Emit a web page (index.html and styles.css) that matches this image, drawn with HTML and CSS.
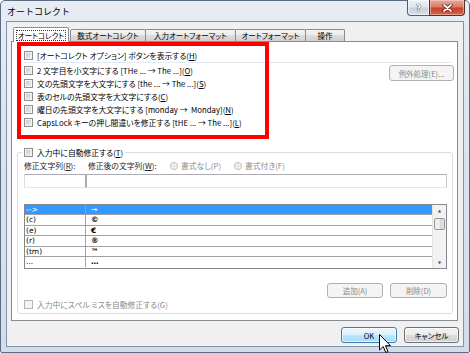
FILE: index.html
```html
<!doctype html>
<html lang="ja">
 <head>
  <meta charset="utf-8">
  <title>オートコレクト</title>
  <link rel="stylesheet" href="styles.css">
 </head>
 <body>
  <div class="dialog">
   <div class="title-bar">
    <span class="title-text">オートコレクト</span>
    <div class="caption-buttons">
     <div class="caption-btn help-btn">?</div>
     <div class="caption-btn close-btn">
      <svg width="11" height="8" viewBox="0 0 11 8"><path d="M2 1 L9 7 M9 1 L2 7" stroke="#3a1a14" stroke-width="3.2" stroke-linecap="round"/><path d="M2 1 L9 7 M9 1 L2 7" stroke="#ffffff" stroke-width="1.8" stroke-linecap="round"/></svg>
     </div>
    </div>
   </div>
   <div class="client">
    <div class="tab-row">
     <div class="tab tab-active"><span class="focus-rect">オートコレクト</span></div>
     <div class="tab tab-math">数式オートコレクト</div>
     <div class="tab tab-input">入力オートフォーマット</div>
     <div class="tab tab-format">オートフォーマット</div>
     <div class="tab tab-action">操作</div>
    </div>
    <div class="tab-panel">
     <div class="annot-box"></div>
     <div class="check-row"><span class="checkbox"></span><span>[オートコレクト オプション] ボタンを表示する(<u>H</u>)</span></div>
     <div class="separator"></div>
     <div class="options-block">
      <div class="option-list">
       <div class="check-row"><span class="checkbox"></span><span>2 文字目を小文字にする [THe ... → The ...](<u>O</u>)</span></div>
       <div class="check-row"><span class="checkbox"></span><span>文の先頭文字を大文字にする [the ... → The ...](<u>S</u>)</span></div>
       <div class="check-row"><span class="checkbox"></span><span>表のセルの先頭文字を大文字にする(<u>C</u>)</span></div>
       <div class="check-row"><span class="checkbox"></span><span>曜日の先頭文字を大文字にする [monday → &nbsp;Monday](<u>N</u>)</span></div>
       <div class="check-row"><span class="checkbox"></span><span>CapsLock キーの押し間違いを修正する [tHE ... → The ...](<u>L</u>)</span></div>
      </div>
      <div class="btn btn-disabled exceptions-btn">例外処理(E)...</div>
     </div>

     <div class="group-box">
      <div class="group-legend"><span class="checkbox"></span><span>入力中に自動修正する(<u>T</u>)</span></div>
      <div class="field-labels">
       <span class="label-from">修正文字列(<u>R</u>):</span>
       <span class="label-to">修正後の文字列(<u>W</u>):</span>
       <span class="radio-item"><span class="radio"></span>書式なし(P)</span>
       <span class="radio-item"><span class="radio"></span>書式付き(F)</span>
      </div>
      <div class="field-inputs">
       <div class="text-input input-from"></div>
       <div class="text-input input-to"></div>
      </div>
      <div class="entry-list">
       <div class="entry-rows">
        <div class="entry-row selected"><span class="col-from">--&gt;</span><span class="col-to">→</span></div>
        <div class="entry-row"><span class="col-from">(c)</span><span class="col-to">©</span></div>
        <div class="entry-row"><span class="col-from">(e)</span><span class="col-to">€</span></div>
        <div class="entry-row"><span class="col-from">(r)</span><span class="col-to">®</span></div>
        <div class="entry-row"><span class="col-from">(tm)</span><span class="col-to">™</span></div>
        <div class="entry-row"><span class="col-from">...</span><span class="col-to">…</span></div>
       </div>
       <div class="scrollbar">
        <div class="scroll-arrow">&#9650;</div>
        <div class="scroll-thumb"></div>
        <div class="scroll-track"></div>
        <div class="scroll-arrow">&#9660;</div>
       </div>
      </div>
      <div class="list-buttons">
       <div class="btn btn-disabled btn-add">追加(A)</div>
       <div class="btn btn-disabled btn-delete">削除(D)</div>
      </div>
      <div class="check-row check-disabled"><span class="checkbox"></span><span>入力中にスペル ミスを自動修正する(G)</span></div>
     </div>
    </div>
    <div class="dialog-footer">
     <div class="btn btn-hover btn-ok">OK</div>
     <div class="btn btn-cancel">キャンセル</div>
    </div>
   </div>
   <svg class="cursor" width="13" height="20" viewBox="0 0 13 20"><path d="M0.5 0.5 L0.5 16 L4.2 12.5 L6.8 18.5 L9 17.5 L6.5 11.7 L11.5 11.7 Z" fill="#ffffff" stroke="#000000" stroke-width="1" stroke-linejoin="miter"/></svg>
  </div>
 </body>
</html>
```

FILE: styles.css
```css
	* {
		box-sizing: border-box;
	}

	body {
		margin: 0;
		padding: 0;
		background: #ffffff;
		font-family: "Noto Sans CJK JP", "Noto Sans", sans-serif;
		font-size: 7.8px;
		font-feature-settings: "palt";
		color: #000000;
	}

	u {
		text-decoration-thickness: 1px;
		text-underline-offset: 1px;
	}

	/* window frame */
	.dialog {
		position: relative;
		width: 470px;
		height: 353px;
		border: 1px solid #5b6d83;
		border-radius: 5px 5px 2px 2px;
		background: linear-gradient(to bottom, #e8edf3 0%, #dde5ee 30%, #d3dde9 100%);
		padding: 0 5px 5px 5px;
		display: flex;
		flex-direction: column;
	}

	.title-bar {
		height: 20px;
		display: flex;
		align-items: flex-start;
	}

	.title-text {
		font-size: 9px;
		line-height: 11px;
		margin: 5px 0 0 1px;
		font-feature-settings: normal;
	}

	.caption-buttons {
		display: flex;
		margin: -1px -1px 0 auto;
	}

	.caption-btn {
		height: 16px;
		border: 1px solid #4f5f72;
		border-top: 0;
		display: flex;
		align-items: center;
		justify-content: center;
	}

	.help-btn {
		width: 23px;
		border-radius: 0 0 0 4px;
		background: linear-gradient(to bottom, #eef2f7 0%, #dfe6ee 45%, #c9d3df 55%, #d6dee8 100%);
		color: #ffffff;
		font-family: "DejaVu Sans", sans-serif;
		font-size: 9px;
		font-weight: bold;
		text-shadow: 0 0 1px #2c3846, 0 0 1px #2c3846;
		box-shadow: inset 0 0 0 1px rgba(255, 255, 255, 0.6);
	}

	.close-btn {
		width: 36px;
		margin-left: -1px;
		border-radius: 0 0 4px 0;
		border-color: #5a2e28;
		background: linear-gradient(to bottom, #e9a99a 0%, #d97b67 45%, #c5432c 55%, #d2654d 100%);
		box-shadow: inset 0 0 0 1px rgba(255, 220, 210, 0.5);
	}

	/* client area */
	.client {
		flex: 1;
		background: #f0f0f0;
		border: 1px solid #8394aa;
		display: flex;
		flex-direction: column;
		padding: 0 5px 3px 4px;
	}

	.tab-row {
		display: flex;
		align-items: flex-end;
		padding: 5px 0 0 2px;
		height: 19px;
		position: relative;
		z-index: 2;
	}

	.tab {
		height: 12px;
		border: 1px solid #898c95;
		border-bottom: 0;
		border-radius: 2px 2px 0 0;
		background: linear-gradient(to bottom, #f3f3f3 0%, #ebebeb 50%, #dddddd 50%, #cfcfcf 100%);
		display: flex;
		align-items: center;
		justify-content: center;
		margin-left: -1px;
		white-space: nowrap;
		font-size: 7.5px;
	}

	.tab-active {
		height: 15px;
		margin: 0 2px -1px 0;
		width: 56px;
		background: #ffffff;
		align-items: flex-start;
		padding-top: 2px;
	}

	.focus-rect {
		border: 1px dotted #333333;
		padding: 0 1px;
		line-height: 9px;
	}

	.tab-math { width: 76px; }
	.tab-input { width: 91px; }
	.tab-format { width: 71px; }
	.tab-action { width: 40px; }

	.tab-panel {
		position: relative;
		background: #ffffff;
		border: 1px solid #898c95;
		height: 280px;
		padding-top: 7px;
		display: flex;
		flex-direction: column;
	}

	/* red annotation frame */
	.annot-box {
		position: absolute;
		left: 5px;
		top: 0;
		width: 252px;
		height: 97px;
		border: 4px solid #ff0000;
		z-index: 3;
	}

	.check-row {
		display: flex;
		align-items: center;
		height: 13px;
		gap: 4px;
		padding-left: 12px;
		white-space: nowrap;
	}

	.checkbox {
		flex: none;
		width: 9px;
		height: 9px;
		border: 1px solid #8e8f8f;
		background: linear-gradient(135deg, #c4c8cd 0%, #dfe1e3 60%, #f3f3f3 100%);
		box-shadow: inset 0 0 0 1px #f4f4f4;
	}

	.separator {
		height: 1px;
		margin: 1px 6px 0 12px;
		background: #e2e8ef;
	}

	.options-block {
		display: flex;
		align-items: flex-start;
		margin-top: 1px;
	}

	.option-list {
		display: flex;
		flex-direction: column;
	}

	.btn {
		display: flex;
		align-items: center;
		justify-content: center;
		height: 16px;
		border: 1px solid #707070;
		border-radius: 3px;
		background: linear-gradient(to bottom, #f2f2f2 0%, #ebebeb 50%, #dddddd 50%, #cfcfcf 100%);
		box-shadow: inset 0 0 0 1px rgba(255, 255, 255, 0.7);
		white-space: nowrap;
		font-size: 7.5px;
	}

	.btn-disabled {
		border-color: #adb2b5;
		background: #f4f4f4;
		box-shadow: none;
		color: #8a8a8a;
	}

	.btn-hover {
		border-color: #3c7fb1;
		background: linear-gradient(to bottom, #eaf6fd 0%, #d9f0fc 50%, #bee6fd 50%, #a7d9f5 100%);
	}

	.exceptions-btn {
		width: 65px;
		margin: 1px 3px 0 auto;
	}

	/* group box */
	.group-box {
		margin: 23px 4px 6px 5px;
		border: 1px solid #d5dfe5;
		border-radius: 3px;
		padding: 0 5px 2px 6px;
		display: flex;
		flex-direction: column;
	}

	.group-legend {
		align-self: flex-start;
		display: flex;
		align-items: center;
		gap: 4px;
		height: 13px;
		margin: -7px 0 0 -2px;
		padding: 0 2px;
		background: #ffffff;
	}

	.field-labels {
		display: flex;
		align-items: center;
		height: 11px;
		margin-top: 1px;
		white-space: nowrap;
		color: #222222;
	}

	.label-from { width: 64px; }
	.label-to { width: 82px; }

	.radio-item {
		display: flex;
		align-items: center;
		gap: 3px;
		width: 64px;
		color: #8a8a8a;
	}

	.radio {
		width: 8px;
		height: 8px;
		border-radius: 50%;
		border: 1px solid #b9b9b9;
		background: radial-gradient(circle, #e6e6e6 0%, #e6e6e6 35%, #f7f7f7 45%);
	}

	.field-inputs {
		display: flex;
		height: 14px;
		margin-top: 3px;
	}

	.text-input {
		border: 1px solid #abadb3;
		border-color: #abadb3 #dbdfe6 #e3e9ef #dbdfe6;
		background: #ffffff;
	}

	.input-from {
		width: 62px;
		border-right-color: #abadb3;
	}

	.input-to {
		flex: 1;
		border-left-color: #abadb3;
		border-right-color: #c4c8cf;
	}

	/* replacement list */
	.entry-list {
		display: flex;
		height: 65px;
		margin-top: 16px;
		border: 1px solid #828790;
		background: #ffffff;
		overflow: hidden;
	}

	.entry-rows {
		flex: 1;
		display: flex;
		flex-direction: column;
	}

	.entry-row {
		display: flex;
		height: 10.4px;
		flex: none;
		border-bottom: 1px solid #a0a0a0;
		line-height: 9px;
		font-family: "DejaVu Sans", sans-serif;
		font-size: 7.5px;
	}

	.entry-row.selected {
		background: #3399ff;
		color: #ffffff;
	}

	.col-from {
		width: 61px;
		border-right: 1px solid #a0a0a0;
		padding-left: 1px;
	}

	.col-to {
		padding-left: 5px;
		font-weight: bold;
	}

	.entry-row:last-child {
		border-bottom: 0;
	}

	.scrollbar {
		width: 14px;
		display: flex;
		flex-direction: column;
		background: #f2f2f2;
		border-left: 1px solid #e4e4e4;
	}

	.scroll-arrow {
		height: 11px;
		font-size: 4px;
		color: #4d4d4d;
		display: flex;
		align-items: center;
		justify-content: center;
		font-family: "DejaVu Sans", sans-serif;
	}

	.scroll-thumb {
		height: 12px;
		margin: 2px 1px 0 1px;
		border: 1px solid #959595;
		border-radius: 2px;
		background: linear-gradient(to right, #f2f2f2 0%, #ebebeb 50%, #d6d6d6 51%, #e2e2e2 100%);
	}

	.scroll-track {
		flex: 1;
	}

	.list-buttons {
		display: flex;
		justify-content: flex-end;
		gap: 7px;
		margin-top: 14px;
	}

	.list-buttons .btn {
		height: 15px;
	}

	.btn-add { width: 56px; }
	.btn-delete { width: 57px; }

	.check-disabled {
		padding-left: 0;
		color: #8a8a8a;
	}

	.check-disabled .checkbox {
		border-color: #b5b5b5;
		background: #f4f4f4;
	}

	/* dialog buttons */
	.dialog-footer {
		display: flex;
		justify-content: flex-end;
		gap: 7px;
		margin: 6px -1px 0 0;
	}

	.btn-ok { width: 56px; }
	.btn-cancel { width: 55px; }

	.cursor {
		position: absolute;
		left: 378px;
		top: 333px;
		z-index: 5;
	}
```
